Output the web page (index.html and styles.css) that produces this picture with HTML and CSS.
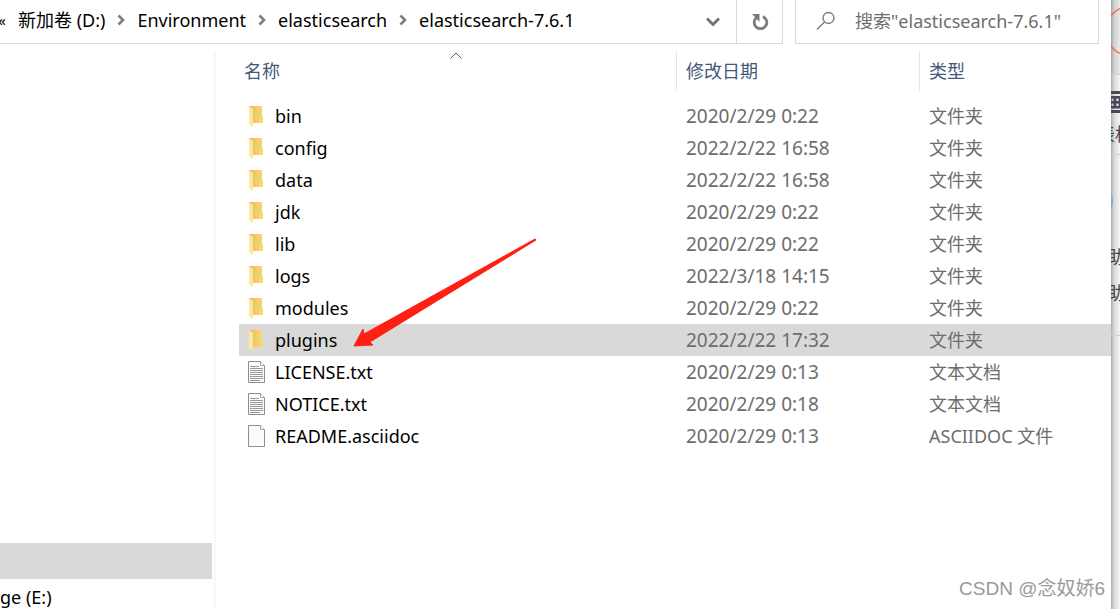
FILE: index.html
```
<!DOCTYPE html>
<html lang="zh-CN">
<head>
<meta charset="utf-8">
<title>elasticsearch-7.6.1</title>
<link rel="stylesheet" href="styles.css">
</head>
<body>
<svg class="defs" aria-hidden="true">
  <defs>
    <linearGradient id="flap" x1="0" y1="0" x2="1" y2="0"><stop offset="0" stop-color="#ffeaa6"/><stop offset="1" stop-color="#fbe29a"/></linearGradient>
    <linearGradient id="back" x1="0" y1="0" x2="1" y2="0"><stop offset="0" stop-color="#e6bd5c"/><stop offset="1" stop-color="#f9d978"/></linearGradient>
    <symbol id="folder" viewBox="0 0 18 22">
      <path d="M1 1h13v10l1 1v6H4L1 18z" fill="url(#back)"/>
      <path d="M1 1l4 3v18l-4-3z" fill="url(#flap)"/>
    </symbol>
    <symbol id="page" viewBox="0 0 18 22">
      <path d="M.5.5h12l4 4v17H.5z" fill="#fafbfc" stroke="#8b8f92"/>
      <path d="M12.5.5v4h4" fill="#fff" stroke="#a3a7aa"/>
    </symbol>
    <symbol id="text" viewBox="0 0 18 22">
      <use href="#page"/>
      <path d="M2 5.5h9M2 7.5h13M2 9.5h13M2 11.5h13M2 13.5h13M2 15.5h13M2 17.5h13M2 19.5h10" stroke="#9a9a9a"/>
    </symbol>
    <symbol id="chevron" viewBox="0 0 8 12"><path d="M1.5 1.5L6 6l-4.500 4.500" fill="none" stroke="#7f7f7f" stroke-width="2.600"/></symbol>
  </defs>
</svg>
<div class="desktop">
  <div class="window">
    <header class="toolbar">
      <div class="address">
        <nav class="crumbs" aria-label="路径">
          <span class="more">«</span>
          <a href="#">新加卷 (D:)</a>
          <svg class="chevron"><use href="#chevron"/></svg>
          <a href="#">Environment</a>
          <svg class="chevron"><use href="#chevron"/></svg>
          <a href="#">elasticsearch</a>
          <svg class="chevron"><use href="#chevron"/></svg>
          <a href="#">elasticsearch-7.6.1</a>
        </nav>
        <button class="history" aria-label="以前的位置"><svg width="14" height="10" viewBox="0 0 14 10"><path d="M1 1.500l6 6 6-6" fill="none" stroke="#737373" stroke-width="2.800"/></svg></button>
        <button class="refresh" aria-label="刷新"><svg width="18" height="18" viewBox="0 0 18 18"><path d="M5.500 4.500A6.300 6.300 0 1 0 12 3.600" fill="none" stroke="#7c7c7c" stroke-width="2.800"/><path d="M1 1h7.500v8z" fill="#7c7c7c"/></svg></button>
      </div>
      <label class="search">
        <svg width="20" height="20" viewBox="0 0 20 20"><circle cx="12.500" cy="7" r="5.500" fill="none" stroke="#777" stroke-width="1.300"/><path d="M8.500 11L1 18.500" stroke="#777" stroke-width="1.300"/></svg>
        <input type="search" aria-label="搜索" placeholder='搜索"elasticsearch-7.6.1"'>
      </label>
    </header>
    <div class="body">
      <aside class="tree">
        <button class="node selected" aria-label="新加卷 (D:)"></button>
        <button class="node">ge (E:)</button>
      </aside>
      <main class="files">
        <table>
          <colgroup><col class="c-name"><col class="c-date"><col></colgroup>
          <thead><tr><th>名称<svg class="sort" width="12" height="7" viewBox="0 0 12 7"><path d="M.5 6.500L6 1l5.500 5.500" fill="none" stroke="#555"/></svg></th><th>修改日期</th><th>类型</th></tr></thead>
          <tbody>
            <tr><td><svg><use href="#folder"/></svg>bin</td><td>2020/2/29 0:22</td><td>文件夹</td></tr>
            <tr><td><svg><use href="#folder"/></svg>config</td><td>2022/2/22 16:58</td><td>文件夹</td></tr>
            <tr><td><svg><use href="#folder"/></svg>data</td><td>2022/2/22 16:58</td><td>文件夹</td></tr>
            <tr><td><svg><use href="#folder"/></svg>jdk</td><td>2020/2/29 0:22</td><td>文件夹</td></tr>
            <tr><td><svg><use href="#folder"/></svg>lib</td><td>2020/2/29 0:22</td><td>文件夹</td></tr>
            <tr><td><svg><use href="#folder"/></svg>logs</td><td>2022/3/18 14:15</td><td>文件夹</td></tr>
            <tr><td><svg><use href="#folder"/></svg>modules</td><td>2020/2/29 0:22</td><td>文件夹</td></tr>
            <tr class="selected"><td><svg><use href="#folder"/></svg>plugins</td><td>2022/2/22 17:32</td><td>文件夹</td></tr>
            <tr><td><svg><use href="#text"/></svg>LICENSE.txt</td><td>2020/2/29 0:13</td><td>文本文档</td></tr>
            <tr><td><svg><use href="#text"/></svg>NOTICE.txt</td><td>2020/2/29 0:18</td><td>文本文档</td></tr>
            <tr><td><svg><use href="#page"/></svg>README.asciidoc</td><td>2020/2/29 0:13</td><td>ASCIIDOC 文件</td></tr>
          </tbody>
        </table>
        <svg class="pointer" width="184" height="110" viewBox="0 0 184 110"><path d="M1 108L10 91l1 5L182 1l1 1L17 104l3 3z" fill="#ff2013" stroke="#ff2013" stroke-linejoin="round"/></svg>
        <div class="watermark">CSDN @念奴娇6</div>
      </main>
    </div>
  </div>
  <div class="behind" aria-hidden="true">
    <div class="block ring"><svg width="9" height="52" viewBox="0 0 9 52"><circle cx="20" cy="26" r="25" fill="none" stroke="#ef6a55" stroke-width="1.500"/></svg></div>
    <div class="block title"><b>画</b><span>表格</span></div>
    <div class="block help"><i></i><span>助</span><span>助</span></div>
    <div class="block rest"></div>
  </div>
</div>
</body>
</html>
```
FILE: styles.css
```
* { box-sizing: border-box; }
body {
  margin: 0;
  background: #fff;
  color: #000;
  font: 18px/32px "Noto Sans", "Noto Sans CJK SC", sans-serif;
}
button, input { font: inherit; color: inherit; border: 0; background: none; padding: 0; }
a { color: inherit; text-decoration: none; }
.defs { position: absolute; width: 0; height: 0; }
.desktop { display: flex; min-height: 100vh; overflow: hidden; }
.window { flex: 1; min-width: 0; display: flex; flex-direction: column; }

.toolbar { display: flex; gap: 12px; padding-right: 12px; height: 44px; }
.address { flex: 1; display: flex; border: solid #d9d9d9; border-width: 0 1px 1px 0; }
.crumbs { flex: 1; display: flex; align-items: center; gap: 12px; white-space: nowrap; overflow: hidden; padding-bottom: 3px; }
.more { width: 6px; display: flex; justify-content: flex-end; font-size: 15px; }
.chevron { width: 8px; height: 12px; flex: none; }
.history, .refresh { width: 46px; display: flex; align-items: center; justify-content: center; }
.refresh { border-left: 1px solid #d9d9d9; }
.search { width: 304px; display: flex; align-items: center; gap: 19px; padding: 0 20px 2px; border: solid #d9d9d9; border-width: 0 1px 1px; }
.search svg { flex: none; }
.search input { flex: 1; min-width: 0; outline: 0; }
.search input::placeholder { color: #6d6d6d; opacity: 1; }

.body { flex: 1; display: flex; }
.tree { width: 216px; margin-top: 7px; padding-right: 2px; border-right: 2px solid #f7f7f7; display: flex; flex-direction: column; justify-content: flex-end; }
.node { height: 36px; text-align: left; flex: none; }
.node:last-child { height: 30px; padding-top: 2px; }
.node.selected { background: #d9d9d9; }
.files { flex: 1; position: relative; padding: 7px 0 0 23px; }
table { width: 100%; table-layout: fixed; border-collapse: separate; border-spacing: 0; }
.c-name { width: 437px; }
.c-date { width: 243px; }
th { position: relative; height: 40px; padding: 0 0 0 9px; text-align: left; font-weight: 400; color: #43597a; border-left: 1px solid #e5e5e5; }
th:first-child { padding-left: 4px; border-left-color: transparent; }
.sort { position: absolute; left: 50%; top: 1px; margin-left: -8px; }
tbody::before { content: ""; display: block; height: 9px; }
td { height: 32px; padding: 0 0 0 10px; color: #6d6d6d; white-space: nowrap; }
td:first-child { padding-left: 9px; color: #000; }
td:nth-child(2) { font-size: 19px; }
td svg { display: block; float: left; width: 18px; height: 22px; margin: 5px 9px 0 0; }
tr.selected td { background: #d9d9d9; }
.pointer { position: absolute; left: 137px; top: 194px; }
.watermark { position: absolute; right: 6px; bottom: 5px; color: #999; font: 19px/30px "Liberation Sans", "Noto Sans CJK SC", sans-serif; }

.behind { width: 9px; overflow: hidden; background: linear-gradient(90deg, #aaa, #d8d8d8 3px, #f5f5f5 9px); color: #444; }
.block { border-bottom: 1px solid #d0d0d0; overflow: hidden; }
.block span, .block b { display: block; white-space: nowrap; }
.ring { height: 75px; padding-top: 5px; background: #0000000a; }
.title { height: 80px; padding-top: 11px; }
.title b { font-size: 26px; text-indent: -9px; color: #4a495c; }
.title span { text-indent: -14px; }
.help { height: 181px; padding-top: 34px; }
.help i { display: block; width: 16px; height: 24px; margin: 0 0 28px -14px; border-radius: 50%; background: #6bb2d5; }
.help span { height: 36px; text-indent: -4px; }
.rest { border: 0; }
```
